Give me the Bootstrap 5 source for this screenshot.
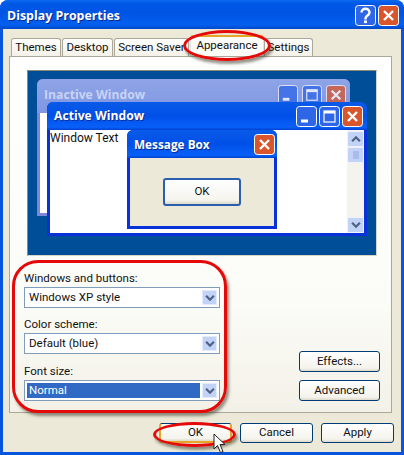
<!DOCTYPE html>
<html lang="en">
<head>
<meta charset="UTF-8">
<meta name="viewport" content="width=device-width, initial-scale=1.0">
<title>Display Properties</title>
<link href="https://cdn.jsdelivr.net/npm/bootstrap@5.3.0/dist/css/bootstrap.min.css" rel="stylesheet">
<style>
html, body { margin: 0; height: 455px; overflow: hidden; background: #fff; }
body { font-family: Roboto, "Liberation Sans", Arial, sans-serif; font-size: 11.5px; color: #111; }

.xp-dialog { position: relative; width: 404px; height: 455px; display: flex; flex-direction: column; background: #0855dd; border-radius: 8px 8px 0 0; overflow: hidden; }
.xp-titlebar { height: 29px; flex: none; padding: 1px 5px 0 7px; display: flex; align-items: center; gap: 2px; background: linear-gradient(#0a6af0, #0058e6 12%, #0054e3 45%, #0460f0 85%, #0048c8); }
.xp-title { font-family: "Open Sans", sans-serif; font-weight: 700; color: #fff; text-shadow: 1px 1px 0 #0a2a90; }
.xp-titlebar .xp-title { font-size: 12.4px; line-height: 1; margin-top: 2px; }
.xp-body { flex: 1; margin: 0 3px 3px; background: #ece9d8; padding: 9px 9px 0 6px; display: flex; flex-direction: column; }

.xp-tabs { border: 0; flex-wrap: nowrap; height: 18px; margin-left: 2px; align-items: flex-end; position: relative; z-index: 2; }
.xp-tabs .nav-link { height: 18px; padding: 0; margin: 0 1px 0 0; color: #111; background: linear-gradient(#fff, #f3f1e7); border: 1px solid #aca899; border-bottom: 0; border-radius: 3px 3px 0 0; font-size: 11.5px; line-height: 17px; text-align: center; white-space: nowrap; overflow: hidden; }
.xp-tabs .nav-link.active { height: 21px; margin: 0; padding: 1px 0 0; background: #fbfbf8; border-top: 2px solid #e6a528; color: #111; line-height: 15px; }
.tab-themes { width: 50px; }
.tab-desktop { width: 51px; }
.tab-screen { width: 75px; }
.tab-appear { width: 74px; }
.tab-settings { width: 49px; }

.xp-panel { height: 357px; flex: none; border: 1px solid #aca899; background: linear-gradient(#fff, #fbfbf7 70%, #f3f1e7); padding: 13px 14px 0 17px; display: flex; flex-direction: column; }
.xp-preview { position: relative; height: 186px; background: #004e98; border: 1px solid #8d8a75; border-right-color: #d8d5c4; border-bottom-color: #d8d5c4; flex: none; }

.mini-win { position: absolute; display: flex; flex-direction: column; padding: 0 3px 3px; background: #0831d9; border-radius: 6px 6px 0 0; }
.mini-bar { flex: none; display: flex; align-items: center; background: linear-gradient(#0a5ae8, #0050e8 50%, #0860f8 90%, #0040d0); margin: 0 -3px; padding: 0 4px 0 7px; border-radius: 6px 6px 0 0; }
.mini-bar .xp-title { font-size: 12.2px; line-height: 1; }
.mini-fill { flex: 1; background: #fff; }
.win-inactive { left: 9px; top: 8px; width: 313px; height: 137px; background: #7b87d8; }
.win-inactive .mini-bar { height: 34px; align-items: flex-start; padding-top: 6px; background: linear-gradient(#8ea4e6, #7f96e2); }
.win-inactive .xp-title { color: #c8d4f4; text-shadow: none; margin-top: 4px; }
.win-inactive svg { opacity: .75; }
.win-active { left: 19px; top: 31px; width: 320px; height: 134px; }
.win-active .mini-bar { height: 28px; gap: 2px; }
.win-active .mini-fill { display: flex; min-height: 0; }
.win-text { flex: 1; font-size: 12px; line-height: 14px; padding-top: 1px; }
.win-msg { left: 99px; top: 59px; width: 150px; height: 99px; }
.win-msg .mini-bar { height: 28px; padding-right: 2px; }
.win-msg .mini-bar .xp-title { font-size: 11.8px; margin-top: 1px; }
.win-msg .mini-fill { background: #ece9d8; display: flex; justify-content: center; padding-top: 20px; }

.mini-scroll { width: 17px; flex: none; display: flex; flex-direction: column; background: #f4f3ee; padding-top: 1px; }
.scroll-btn { height: 16px; flex: none; display: flex; align-items: center; justify-content: center; background: #c3d3f8; border: 1px solid #eef2fd; border-radius: 2px; }
.scroll-gap { flex: 1; }

.xp-btn { display: flex; align-items: center; justify-content: center; padding: 0; height: 21px; font-size: 11.5px; color: #111; border: 1px solid #003c74; border-radius: 3px; background: linear-gradient(#fff, #f4f3ec 85%, #dcd8c8); }
.xp-btn:hover { color: #111; border-color: #003c74; background: #fff; }
.msg-ok { width: 78px; height: 28px; border-width: 2px; border-color: #2a5fb0; }

.lower { flex: 1; display: flex; justify-content: space-between; margin-left: -3px; }
.form-col { width: 196px; padding-top: 15px; }
.field-label { margin: 0 0 2px; font-size: 11.5px; line-height: 14px; display: block; }
.field-gap { height: 9px; }
.field-gap.wide { height: 10px; }
.combo { height: 21px; padding: 2px; display: flex; background: #fff; border: 1px solid #7f9db9; font-size: 11.5px; line-height: 15px; }
.combo-val { flex: 1; padding: 0 2px; }
.combo-val.picked { background: #316ac5; color: #fff; margin-right: 2px; }
.combo-arrow { width: 15px; flex: none; display: flex; align-items: center; justify-content: center; background: #c3d3f8; border: 1px solid #e4ebfc; }
.side-btns { width: 81px; margin-top: 95px; margin-right: -3px; display: flex; flex-direction: column; gap: 8px; }

.foot { display: flex; justify-content: flex-end; gap: 8px; padding-top: 10px; margin-right: -2px; }
.foot .xp-btn { width: 73px; height: 20px; }
.foot .is-default { border-bottom: 2px solid #e6a528; border-left: 2px solid #e6a528; border-right: 2px solid #e6a528; }

.red-ring { position: absolute; border: 3px solid #e40a0a; box-shadow: 2px 3px 3px rgba(60,60,40,.55); pointer-events: none; z-index: 5; }
.ring-tab { left: 183px; top: 30px; width: 88px; height: 31px; border-radius: 50%; }
.ring-form { left: 12px; top: 260px; width: 215px; height: 153px; border-radius: 26px; }
.ring-ok { left: 153px; top: 422px; width: 83px; height: 25px; border-radius: 50%; }
.cursor-arrow { position: absolute; left: 213px; top: 433px; z-index: 6; }
</style>
</head>
<body>

<svg width="0" height="0" class="position-absolute">
    <symbol id="ic-close" viewBox="0 0 21 21">
        <rect x=".5" y=".5" width="20" height="20" rx="3" fill="#d9562c" stroke="#fff"/>
        <path d="M6 6l9 9M15 6l-9 9" stroke="#fff" stroke-width="2.4"/>
    </symbol>
    <symbol id="ic-help" viewBox="0 0 21 21">
        <rect x=".5" y=".5" width="20" height="20" rx="3" fill="#2f66e8" stroke="#fff"/>
        <path d="M6.5 7.5c0-5 8-5 8 0 0 3-4 3-4 6v1" fill="none" stroke="#fff" stroke-width="2.4"/>
        <rect x="9" y="15.5" width="3" height="2.6" fill="#fff"/>
    </symbol>
    <symbol id="ic-min" viewBox="0 0 21 21">
        <rect x=".5" y=".5" width="20" height="20" rx="3" fill="#2f66e8" stroke="#fff"/>
        <rect x="5" y="13.5" width="7" height="3" fill="#fff"/>
    </symbol>
    <symbol id="ic-max" viewBox="0 0 21 21">
        <rect x=".5" y=".5" width="20" height="20" rx="3" fill="#2f66e8" stroke="#fff"/>
        <rect x="5" y="5" width="11" height="11" fill="none" stroke="#fff" stroke-width="1.2"/>
        <rect x="5" y="5" width="11" height="2.5" fill="#fff"/>
    </symbol>
    <symbol id="ic-chev-down" viewBox="0 0 9 7">
        <path d="M1 1.5l3.5 3.5 3.5-3.5" fill="none" stroke="#4d6185" stroke-width="2"/>
    </symbol>
    <symbol id="ic-chev-up" viewBox="0 0 9 7">
        <path d="M1 5.5l3.5-3.5 3.5 3.5" fill="none" stroke="#4d6185" stroke-width="2"/>
    </symbol>
</svg>

<div class="xp-dialog">
    <!-- title bar -->
    <div class="xp-titlebar">
        <span class="xp-title me-auto">Display Properties</span>
        <svg width="21" height="21"><use href="#ic-help"/></svg>
        <svg width="21" height="21"><use href="#ic-close"/></svg>
    </div>

    <div class="xp-body">
        <ul class="nav nav-tabs xp-tabs">
            <li class="nav-item"><a class="nav-link tab-themes" href="#">Themes</a></li>
            <li class="nav-item"><a class="nav-link tab-desktop" href="#">Desktop</a></li>
            <li class="nav-item"><a class="nav-link tab-screen" href="#">Screen Saver</a></li>
            <li class="nav-item"><a class="nav-link active tab-appear" href="#">Appearance</a></li>
            <li class="nav-item"><a class="nav-link tab-settings" href="#">Settings</a></li>
        </ul>

        <div class="xp-panel">
            <!-- preview -->
            <div class="xp-preview">
                <div class="mini-win win-inactive">
                    <div class="mini-bar">
                        <span class="xp-title me-auto">Inactive Window</span>
                        <svg width="20" height="20"><use href="#ic-min"/></svg>
                        <svg width="20" height="20" class="mx-1"><use href="#ic-max"/></svg>
                        <svg width="20" height="20"><use href="#ic-close"/></svg>
                    </div>
                    <div class="mini-fill"></div>
                </div>
                <div class="mini-win win-active">
                    <div class="mini-bar">
                        <span class="xp-title me-auto">Active Window</span>
                        <svg width="21" height="21"><use href="#ic-min"/></svg>
                        <svg width="21" height="21"><use href="#ic-max"/></svg>
                        <svg width="21" height="21"><use href="#ic-close"/></svg>
                    </div>
                    <div class="mini-fill">
                        <div class="win-text">Window Text</div>
                        <div class="mini-scroll">
                            <div class="scroll-btn"><svg width="10" height="8"><use href="#ic-chev-up"/></svg></div>
                            <div class="scroll-btn"><svg width="8" height="8"><path d="M1 1h6M1 3h6M1 5h6M1 7h6" stroke="#8ea6dc"/></svg></div>
                            <div class="scroll-gap"></div>
                            <div class="scroll-btn"><svg width="10" height="8"><use href="#ic-chev-down"/></svg></div>
                        </div>
                    </div>
                </div>
                <div class="mini-win win-msg">
                    <div class="mini-bar">
                        <span class="xp-title me-auto">Message Box</span>
                        <svg width="21" height="21"><use href="#ic-close"/></svg>
                    </div>
                    <div class="mini-fill">
                        <button type="button" class="btn xp-btn msg-ok">OK</button>
                    </div>
                </div>
            </div>

            <div class="lower">
                <div class="form-col">
                    <label class="field-label">Windows and buttons:</label>
                    <div class="combo">
                        <span class="combo-val">Windows XP style</span>
                        <span class="combo-arrow"><svg width="10" height="8"><use href="#ic-chev-down"/></svg></span>
                    </div>
                    <div class="field-gap"></div>
                    <label class="field-label">Color scheme:</label>
                    <div class="combo">
                        <span class="combo-val">Default (blue)</span>
                        <span class="combo-arrow"><svg width="10" height="8"><use href="#ic-chev-down"/></svg></span>
                    </div>
                    <div class="field-gap wide"></div>
                    <label class="field-label">Font size:</label>
                    <div class="combo">
                        <span class="combo-val picked">Normal</span>
                        <span class="combo-arrow"><svg width="10" height="8"><use href="#ic-chev-down"/></svg></span>
                    </div>
                </div>
                <div class="side-btns">
                    <button type="button" class="btn xp-btn">Effects...</button>
                    <button type="button" class="btn xp-btn">Advanced</button>
                </div>
            </div>
        </div>

        <div class="foot">
            <button type="button" class="btn xp-btn is-default">OK</button>
            <button type="button" class="btn xp-btn">Cancel</button>
            <button type="button" class="btn xp-btn">Apply</button>
        </div>
    </div>

    <!-- red annotations -->
    <div class="red-ring ring-tab"></div>
    <div class="red-ring ring-form"></div>
    <div class="red-ring ring-ok"></div>
    <svg class="cursor-arrow" width="13" height="22" viewBox="0 0 13 22">
        <path d="M1 1v15l3.5-3.5 3 7 2.5-1-3-7h5z" fill="#fff" stroke="#222"/>
    </svg>
</div>

<script src="https://cdn.jsdelivr.net/npm/bootstrap@5.3.0/dist/js/bootstrap.bundle.min.js"></script>
</body>
</html>
